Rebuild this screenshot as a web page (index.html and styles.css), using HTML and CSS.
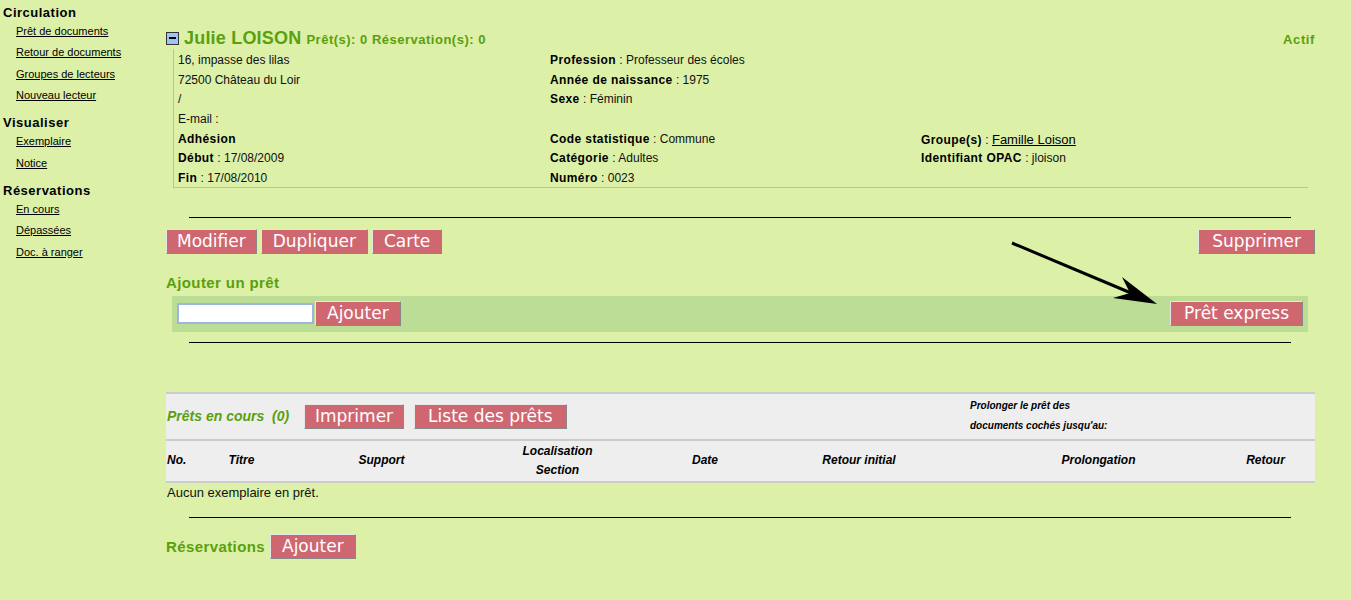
FILE: index.html
```html
<!DOCTYPE html>
<html lang="fr">
<head>
<meta charset="utf-8">
<title>Julie LOISON - Lecteur</title>
<link rel="stylesheet" href="styles.css">
</head>
<body>
<div class="page">
  <nav class="side">
    <h3 class="side-h">Circulation</h3>
    <ul class="side-l">
      <li><a href="#">Prêt de documents</a></li>
      <li><a href="#">Retour de documents</a></li>
      <li><a href="#">Groupes de lecteurs</a></li>
      <li><a href="#">Nouveau lecteur</a></li>
    </ul>
    <h3 class="side-h next">Visualiser</h3>
    <ul class="side-l">
      <li><a href="#">Exemplaire</a></li>
      <li><a href="#">Notice</a></li>
    </ul>
    <h3 class="side-h next">Réservations</h3>
    <ul class="side-l">
      <li><a href="#">En cours</a></li>
      <li><a href="#">Dépassées</a></li>
      <li><a href="#">Doc. à ranger</a></li>
    </ul>
  </nav>

  <main class="main">
    <div class="hdr">
      <span class="toggle"></span>
      <span class="name">Julie LOISON</span>
      <span class="counts">Prêt(s): 0 Réservation(s): 0</span>
      <span class="status">Actif</span>
    </div>

    <div class="info">
      <div>16, impasse des lilas</div>
      <div><b>Profession</b> : Professeur des écoles</div>
      <div></div>
      <div>72500 Château du Loir</div>
      <div><b>Année de naissance</b> : 1975</div>
      <div></div>
      <div>/</div>
      <div><b>Sexe</b> : Féminin</div>
      <div></div>
      <div>E-mail :</div>
      <div></div>
      <div></div>
      <div><b>Adhésion</b></div>
      <div><b>Code statistique</b> : Commune</div>
      <div><b>Groupe(s)</b> : <a class="grp" href="#">Famille Loison</a></div>
      <div><b>Début</b> : 17/08/2009</div>
      <div><b>Catégorie</b> : Adultes</div>
      <div><b>Identifiant OPAC</b> : jloison</div>
      <div><b>Fin</b> : 17/08/2010</div>
      <div><b>Numéro</b> : 0023</div>
      <div></div>
    </div>

    <hr class="sep sep1">

    <div class="actions">
      <div class="btns">
        <button class="btn btn-narrow">Modifier</button>
        <button class="btn">Dupliquer</button>
        <button class="btn">Carte</button>
      </div>
      <button class="btn btn-wide">Supprimer</button>
    </div>

    <h4 class="sect add-title">Ajouter un prêt</h4>
    <div class="addbar">
      <div class="addl">
        <input class="inp" type="text">
        <button class="btn">Ajouter</button>
      </div>
      <button class="btn btn-wide">Prêt express</button>
    </div>

    <hr class="sep sep2">

    <div class="loans">
      <div class="band">
        <div class="band-l">
          <span class="loans-t">Prêts en cours&nbsp; (0)</span>
          <button class="btn btn-narrow">Imprimer</button>
          <button class="btn btn-wide">Liste des prêts</button>
        </div>
        <div class="prolong">Prolonger le prêt des<br>documents cochés jusqu'au:</div>
      </div>
      <div class="thead">
        <div class="c-no">No.</div>
        <div>Titre</div>
        <div>Support</div>
        <div>Localisation<br>Section</div>
        <div>Date</div>
        <div>Retour initial</div>
        <div>Prolongation</div>
        <div>Retour</div>
        <div></div>
      </div>
    </div>
    <p class="empty">Aucun exemplaire en prêt.</p>

    <hr class="sep sep3">

    <div class="resa">
      <span class="sect">Réservations</span>
      <button class="btn">Ajouter</button>
    </div>
  </main>

  <svg class="arrow" width="160" height="75" viewBox="0 0 160 75">
    <line x1="7" y1="8" x2="126" y2="58" stroke="#000" stroke-width="3"/>
    <path d="M152 69 L117 42 L125 58 L108 63 Z" fill="#000"/>
  </svg>
</div>
</body>
</html>
```

FILE: styles.css
```css
* { box-sizing: border-box; }
html, body { margin: 0; padding: 0; }
body {
  background: #dcf0a8;
  font-family: "Liberation Sans", Arial, sans-serif;
  color: #000;
  width: 1351px;
  height: 600px;
  overflow: hidden;
}
.page {
  position: relative;
  display: flex;
  align-items: flex-start;
}

/* Sidebar */
.side {
  width: 166px;
  flex: none;
  padding: 3px 0 0 3px;
}
.side-h {
  margin: 0;
  padding-top: 2px;
  font-size: 13px;
  font-weight: bold;
  letter-spacing: 0.5px;
  line-height: 16px;
}
.side-h.next { margin-top: 7px; }
.side-l {
  list-style: none;
  margin: 0;
  padding: 0 0 0 13px;
}
.side-l li {
  font-size: 11px;
  line-height: 21.33px;
}
.side-l a { color: #000; text-decoration: underline; }

/* Main */
.main {
  width: 1149px;
  flex: none;
}
.hdr {
  display: flex;
  align-items: baseline;
  height: 20px;
  margin-top: 28px;
  color: #5aa00e;
  font-weight: bold;
}
.toggle {
  align-self: center;
  position: relative;
  width: 13px;
  height: 13px;
  border: 1px solid #333;
  background: #9ec4f2;
  margin-right: 5px;
}
.toggle::after {
  content: "";
  position: absolute;
  left: 2px;
  right: 2px;
  top: 4px;
  height: 2px;
  background: #000;
}
.name {
  font-size: 18px;
  line-height: 20px;
  letter-spacing: 0.2px;
  margin-right: 5px;
}
.counts {
  font-size: 13px;
  letter-spacing: 0.5px;
}
.status {
  margin-left: auto;
  font-size: 13px;
  letter-spacing: 0.6px;
}

.info {
  margin: 1px 7px 0 7px;
  border-left: 1px solid #bbb;
  border-bottom: 1px solid #bbb;
  padding: 2px 0 0 4px;
  display: grid;
  grid-template-columns: 372px 371px 1fr;
  grid-template-rows: repeat(6, 19.67px) 17.67px;
  font-size: 12px;
  line-height: 19.67px;
  color: #111;
}
.info b { letter-spacing: 0.4px; color: #000; }
.grp { color: #000; font-size: 13px; text-decoration: underline; }

.sep {
  border: 0;
  border-top: 1px solid #000;
  height: 0;
  margin: 0 24px 0 23px;
}
.sep1 { margin-top: 29px; }
.sep2 { margin-top: 10px; }
.sep3 { margin-top: 14px; }

.btn {
  font-family: "DejaVu Sans", sans-serif;
  font-size: 17px;
  line-height: 23px;
  height: 25px;
  padding: 0 11px;
  margin: 0;
  color: #fff;
  background: #cf6771;
  border: 1px solid;
  border-color: #e6e6e6 #888 #888 #e6e6e6;
  white-space: nowrap;
}
.btn-narrow { padding: 0 10px; }
.btn-wide { padding: 0 13px; }

.actions {
  display: flex;
  justify-content: space-between;
  margin-top: 11px;
}
.btns { display: flex; gap: 4px; }

.sect {
  color: #5aa00e;
  font-size: 15px;
  font-weight: bold;
  letter-spacing: 0.4px;
}
.add-title {
  margin: 20px 0 0 0;
  line-height: 18px;
}
.addbar {
  margin: 4px 7px 0 6px;
  height: 36px;
  background: #bcdd96;
  display: flex;
  align-items: center;
  justify-content: space-between;
  padding: 0 5px;
}
.addl { display: flex; align-items: center; gap: 1px; }
.inp {
  width: 137px;
  height: 21px;
  border: 2px solid #9db5e3;
  background: #fff;
  margin: 0;
  padding: 0 2px;
  font-size: 13px;
}

.loans {
  margin-top: 49px;
  border-top: 2px solid #ccc;
  background: #eee;
}
.band {
  height: 47px;
  display: flex;
  align-items: center;
  border-bottom: 2px solid #ccc;
}
.band-l {
  width: 804px;
  flex: none;
  display: flex;
  align-items: center;
  padding-left: 1px;
}
.loans-t {
  width: 137px;
  color: #5aa00e;
  font-size: 14px;
  font-style: italic;
  font-weight: bold;
  white-space: pre;
}
.band-l .btn + .btn { margin-left: 10px; }
.prolong {
  font-size: 10px;
  font-style: italic;
  font-weight: bold;
  line-height: 20px;
}
.thead {
  height: 42px;
  border-bottom: 2px solid #ccc;
  display: grid;
  grid-template-columns: 22px 107px 173px 179px 116px 192px 287px 47px 1fr;
  align-items: center;
  text-align: center;
  font-size: 12px;
  font-style: italic;
  font-weight: bold;
  line-height: 19px;
}
.thead .c-no { text-align: left; padding-left: 1px; }

.empty {
  margin: 0;
  padding-left: 1px;
  font-size: 13px;
  line-height: 20px;
  color: #111;
}

.resa {
  margin-top: 16px;
  display: flex;
  align-items: center;
  gap: 5px;
}

.arrow {
  position: absolute;
  left: 1005px;
  top: 235px;
}
```
